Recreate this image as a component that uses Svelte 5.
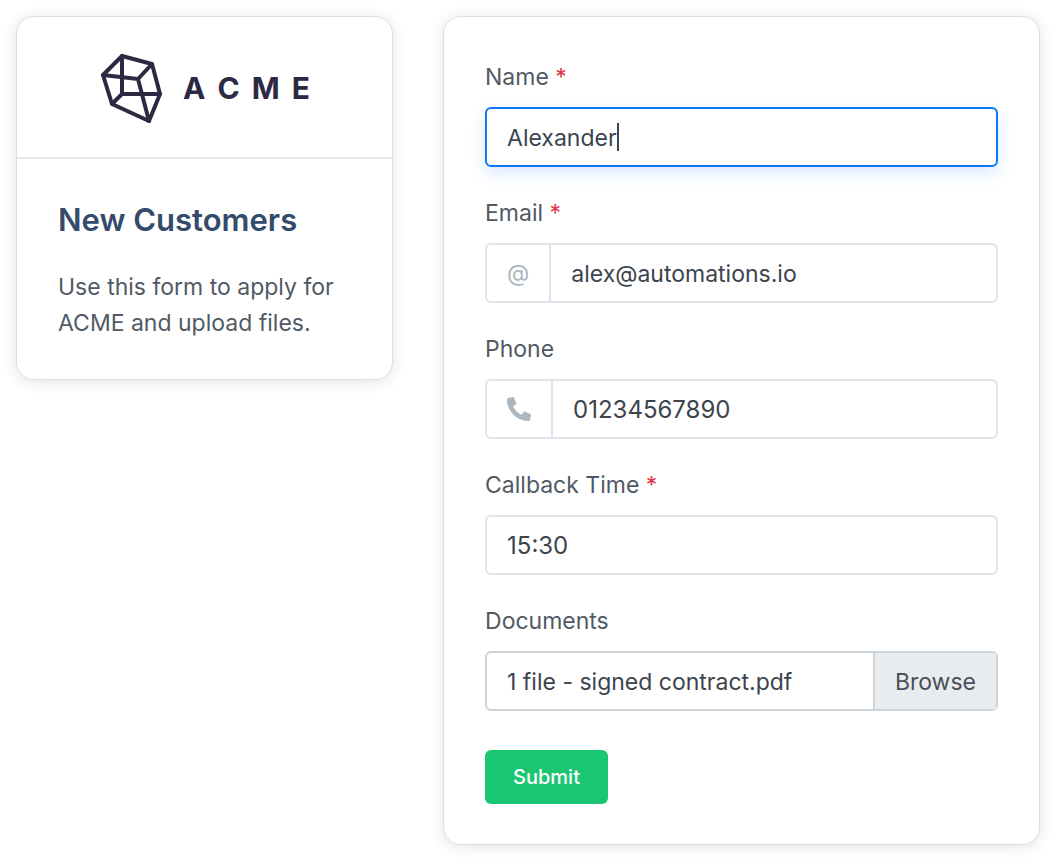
<script lang="ts">
	let name = 'Alexander';
	let email = 'alex@automations.io';
	let phone = '01234567890';
	let callbackTime = '15:30';
	let fileLabel = '1 file - signed contract.pdf';

	const wordmark = ['A', 'C', 'M', 'E'];

	function onFiles(event: Event) {
		const files = (event.target as HTMLInputElement).files;
		if (!files || !files.length) return;
		fileLabel = `${files.length} ${files.length === 1 ? 'file' : 'files'} - ${files[0].name}`;
	}
</script>

<main class="page">
	<section class="card intro">
		<header class="brand">
			<svg width="64" height="72" viewBox="0 0 64 72" fill="none" stroke="currentColor" stroke-width="4" stroke-linejoin="round" stroke-linecap="round" aria-hidden="true">
				<path d="M23 4 L53 12 L61 42 L50 69 L13 52 L4 23 Z" />
				<path d="M23 4 V42 L13 52 M23 42 H61 M4 23 L39 27 L53 12 M39 27 L50 69" />
			</svg>
			<div class="wordmark">
				{#each wordmark as letter}<span>{letter}</span>{/each}
			</div>
		</header>
		<div class="intro-body">
			<h1>New Customers</h1>
			<p>Use this form to apply for ACME and upload files.</p>
		</div>
	</section>

	<form class="card form" on:submit|preventDefault>
		<div class="field">
			<label for="name">Name <span class="required">*</span></label>
			<div class="control control__active">
				<input id="name" type="text" bind:value={name} required />
				<span class="caret" aria-hidden="true">{name}</span>
			</div>
		</div>

		<div class="field">
			<label for="email">Email <span class="required">*</span></label>
			<div class="control">
				<span class="prefix">@</span>
				<input id="email" type="email" bind:value={email} required />
			</div>
		</div>

		<div class="field">
			<label for="phone">Phone</label>
			<div class="control">
				<span class="prefix">
					<svg width="24" height="24" viewBox="0 0 512 512" fill="currentColor" aria-hidden="true">
						<path d="M18.600 24.600l104-24c11.300-2.600 22.900 3.300 27.500 13.900l48 112c4.200 9.800 1.400 21.300-6.900 28l-60.600 49.600c36 76.700 98.900 140.500 177.200 177.200l49.600-60.600c6.800-8.300 18.200-11.100 28-6.900l112 48c10.700 4.700 16.600 16.300 14 27.600l-24 104C484.900 504.200 475.300 512 464 512 207.900 512 0 304.500 0 48 0 36.800 7.700 27.100 18.600 24.600z" />
					</svg>
				</span>
				<input id="phone" class="numeric" type="tel" bind:value={phone} />
			</div>
		</div>

		<div class="field">
			<label for="callback">Callback Time <span class="required">*</span></label>
			<div class="control">
				<input id="callback" class="numeric" type="text" bind:value={callbackTime} required />
			</div>
		</div>

		<div class="field">
			<label for="documents">Documents</label>
			<div class="control control__file">
				<span class="file-name">{fileLabel}</span>
				<span class="browse">Browse</span>
				<input id="documents" class="file-input" type="file" multiple on:change={onFiles} />
			</div>
		</div>

		<button type="submit">Submit</button>
	</form>
</main>

<style>
	:global(body) {
		margin: 0;
		background: #fff;
	}
	.page {
		display: grid;
		grid-template-columns: 12fr 19fr;
		align-items: start;
		gap: 50px;
		padding: 16px;
		font-family: Inter, 'Liberation Sans', sans-serif;
		font-size: 23px;
		line-height: 36px;
		color: #515a64;
	}
	.card {
		box-sizing: border-box;
		min-width: 0;
		background: #fff;
		border: 1px solid #dcdfe1;
		border-radius: 18px;
		box-shadow: 0 2px 14px rgba(40, 60, 70, 0.14);
	}
	.brand {
		display: flex;
		align-items: center;
		justify-content: center;
		gap: 20px;
		padding: 35px 20px 33px;
		border-bottom: 2px solid #e5e6e7;
		color: #2c2a42;
	}
	.wordmark {
		display: flex;
		gap: 12px;
		font-size: 30px;
		font-weight: 700;
	}
	.intro-body {
		padding: 41px 41px 38px;
	}
	h1 {
		margin: 0 0 29px;
		font-size: 31px;
		line-height: 40px;
		font-weight: 600;
		color: #344b6c;
	}
	p {
		margin: 0;
	}
	.form {
		padding: 42px 41px 40px;
	}
	.field {
		margin-bottom: 28px;
	}
	label {
		display: block;
		margin-bottom: 12px;
	}
	.required {
		color: #dc3545;
	}
	.control {
		position: relative;
		display: flex;
		box-sizing: border-box;
		height: 60px;
		border: 2px solid #dfe4ea;
		border-radius: 6px;
		color: #3c444d;
	}
	.control__active {
		border-color: #0d78f2;
		box-shadow: 0 6px 16px rgba(13, 120, 242, 0.16);
	}
	.control__file {
		border-color: #cdd3da;
	}
	input {
		flex: 1;
		min-width: 0;
		padding: 2px 20px 0;
		border: 0;
		outline: none;
		background: transparent;
		font: inherit;
		color: inherit;
	}
	.numeric {
		font-size: 24px;
	}
	#name {
		caret-color: transparent;
	}
	.caret {
		position: absolute;
		top: 14px;
		left: 20px;
		height: 28px;
		border-right: 2px solid #3c444d;
		color: transparent;
		pointer-events: none;
	}
	.prefix {
		display: flex;
		align-items: center;
		padding: 0 20px;
		border-right: 2px solid #dfe4ea;
		color: #adb5bd;
	}
	.file-name {
		flex: 1;
		min-width: 0;
		padding: 0 20px;
		line-height: 58px;
		white-space: nowrap;
		overflow: hidden;
		text-overflow: ellipsis;
	}
	.browse {
		padding: 0 20px;
		border-left: 2px solid #cdd3da;
		background: #e9ecef;
		line-height: 58px;
		height: 56px;
		color: #495057;
	}
	.file-input {
		position: absolute;
		inset: 0;
		width: 100%;
		opacity: 0;
		cursor: pointer;
	}
	button {
		display: block;
		margin-top: 39px;
		padding: 9px 28px;
		border: 0;
		border-radius: 6px;
		background: #19c671;
		font: inherit;
		font-size: 20px;
		font-weight: 500;
		color: #fff;
		cursor: pointer;
	}
</style>
